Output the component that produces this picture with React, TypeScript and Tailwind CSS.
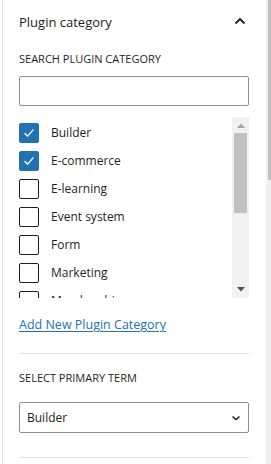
import React from 'react';

const terms = [
  { name: 'Builder', checked: true },
  { name: 'E-commerce', checked: true },
  { name: 'E-learning', checked: false },
  { name: 'Event system', checked: false },
  { name: 'Form', checked: false },
  { name: 'Marketing', checked: false },
  { name: 'Membership', checked: false },
];

const Checkbox: React.FC<{ checked: boolean }> = ({ checked }) => (
  <span
    className={
      checked
        ? 'w-[20px] h-[20px] shrink-0 rounded-[2px] border border-[#2271b1] bg-[#2271b1] flex items-center justify-center'
        : 'w-[20px] h-[20px] shrink-0 rounded-[2px] border border-[#1e1e1e] bg-white'
    }
  >
    {checked && (
      <svg width="20" height="20" viewBox="0 0 20 20" fill="none">
        <path d="M5.5 10.5 L8.5 13.5 L14.5 6.5" stroke="white" strokeWidth="1.5" strokeLinecap="round" strokeLinejoin="round" />
      </svg>
    )}
  </span>
);

export default function App() {
  return (
    <div
      className="w-[271px] h-[464px] overflow-hidden bg-white flex text-[#1e1e1e]"
      style={{ fontFamily: '"Open Sans", "Noto Sans", sans-serif' }}
    >
      <div className="w-[2px] shrink-0 bg-white" />

      {/* Panel */}
      <div className="flex-1 border-l border-[#dddddd] pl-[16px] pr-[17px]">
        {/* Header */}
        <div className="h-[44px] flex items-center justify-between">
          <span className="text-[13px] leading-[18px]">Plugin category</span>
          <svg width="12" height="8" viewBox="0 0 12 8" fill="none" className="mr-[3px] -mt-[2px]">
            <path d="M1.5 6.5 L6 2 L10.5 6.5" stroke="#1e1e1e" strokeWidth="1.8" />
          </svg>
        </div>

        <div className="mt-[7px] text-[11px] leading-[16px] uppercase">Search Plugin Category</div>
        <input
          type="text"
          className="mt-[9px] block w-full h-[30px] rounded-[2px] border border-[#8c8f94] bg-white outline-none px-2 text-[12px]"
        />

        {/* Term list */}
        <div className="mt-[11px] h-[181px] flex overflow-hidden">
          <div className="flex-1 pt-[6px] overflow-hidden">
            {terms.map((t) => (
              <div key={t.name} className="h-[20px] mb-[8px] flex items-center gap-[12px]">
                <Checkbox checked={t.checked} />
                <span className="text-[12px] leading-[20px]">{t.name}</span>
              </div>
            ))}
          </div>
          <div className="w-[17px] shrink-0 bg-[#f1f1f1] flex flex-col">
            <div className="h-[16px] flex items-center justify-center">
              <svg width="8" height="5" viewBox="0 0 8 5">
                <path d="M0 5 L4 0.5 L8 5 Z" fill="#a3a3a3" />
              </svg>
            </div>
            <div className="mx-[2px] h-[80px] bg-[#c1c1c1]" />
            <div className="flex-1" />
            <div className="h-[17px] flex items-center justify-center">
              <svg width="8" height="5" viewBox="0 0 8 5">
                <path d="M0 0 L4 4.5 L8 0 Z" fill="#505050" />
              </svg>
            </div>
          </div>
        </div>

        <a href="#" className="mt-[18px] block text-[12.5px] leading-[18px] text-[#2271b1] underline underline-offset-[2px]">
          Add New Plugin Category
        </a>

        <div className="mt-[19px] h-px bg-[#e0e0e0]" />

        <div className="mt-[16px] text-[11px] leading-[16px] uppercase">Select Primary Term</div>

        <div className="mt-[16px] h-[31px] rounded-[2px] border border-[#8c8f94] flex items-center justify-between pl-[7px] pr-[7px]">
          <span className="text-[12px] leading-[18px]">Builder</span>
          <svg width="10" height="6" viewBox="0 0 10 6" fill="none">
            <path d="M1.5 1.5 L5 4.5 L8.5 1.5" stroke="#1e1e1e" strokeWidth="1.5" />
          </svg>
        </div>

        <div className="mt-[24px] h-px bg-[#e0e0e0]" />
      </div>

      {/* Sidebar scrollbar */}
      <div className="w-[5px] shrink-0 bg-[#f0f0f0] flex justify-end">
        <div className="w-[3px] h-[180px] bg-[#c1c1c1]" />
      </div>
    </div>
  );
}
